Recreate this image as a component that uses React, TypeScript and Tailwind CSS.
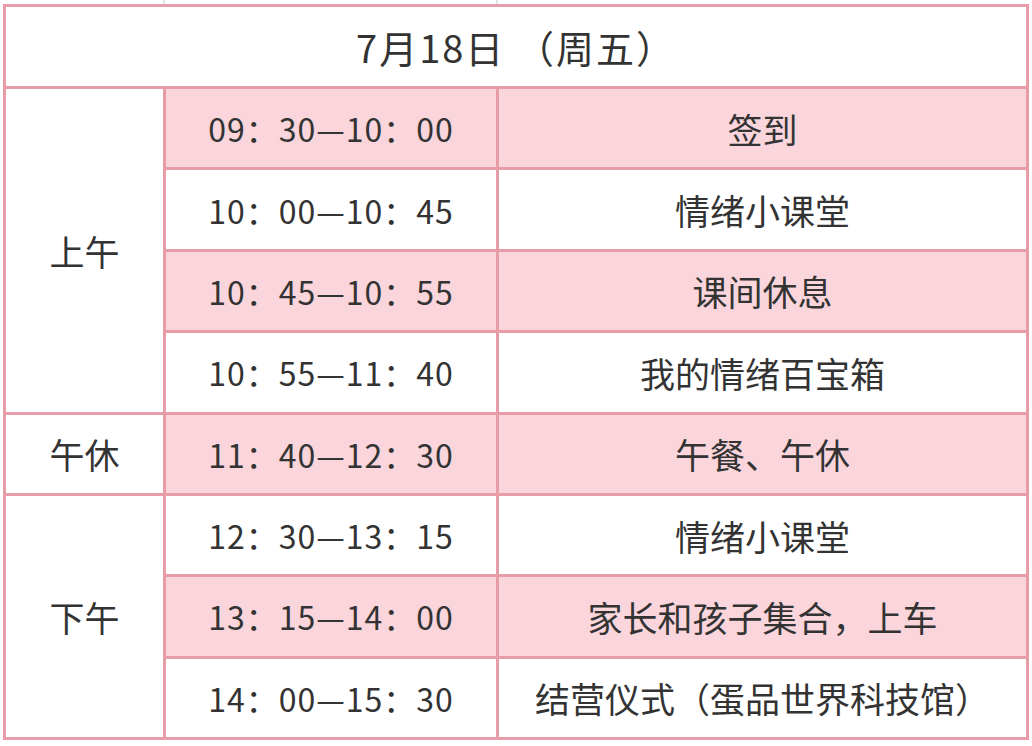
const rows = [
  { time: "09：30—10：00", text: "签到", pink: true },
  { time: "10：00—10：45", text: "情绪小课堂", pink: false },
  { time: "10：45—10：55", text: "课间休息", pink: true },
  { time: "10：55—11：40", text: "我的情绪百宝箱", pink: false },
  { time: "11：40—12：30", text: "午餐、午休", pink: true },
  { time: "12：30—13：15", text: "情绪小课堂", pink: false },
  { time: "13：15—14：00", text: "家长和孩子集合，上车", pink: true },
  { time: "14：00—15：30", text: "结营仪式（蛋品世界科技馆）", pink: false },
];

const periods = [
  { label: "上午", cls: "row-start-2 row-span-4" },
  { label: "午休", cls: "row-start-6 row-span-1" },
  { label: "下午", cls: "row-start-7 row-span-3" },
];

const rowStart = ["row-start-2", "row-start-3", "row-start-4", "row-start-5", "row-start-6", "row-start-7", "row-start-8", "row-start-9"];

export default function App() {
  return (
    <div
      className="w-[1032px] h-[746px] bg-white text-[#333333] overflow-hidden"
      style={{ fontFamily: '"Noto Sans CJK SC", "Noto Sans", sans-serif' }}
    >
      {/* faint lines above the table */}
      <div className="flex h-[4px]">
        <div className="w-[165px] border-r-2 border-[#e4e4e4]" />
        <div className="w-[333px] border-r-2 border-[#e4e4e4]" />
      </div>
      <div className="ml-[3px] w-[1026px] h-[736px] bg-[#e89ca7] p-[3px] grid grid-cols-[157px_330px_527px] grid-rows-[79px_repeat(8,1fr)] gap-[3px]">
        <div className="col-span-3 bg-white flex items-center justify-center text-[38px] tracking-[2px] leading-none">
          7月18日 （周五）
        </div>
        {periods.map((p) => (
          <div
            key={p.label}
            className={`${p.cls} col-start-1 bg-white flex items-center justify-center text-[35px] leading-none`}
          >
            {p.label}
          </div>
        ))}
        {rows.map((r, i) => (
          <div key={i} className="contents">
            <div
              className={`${rowStart[i]} col-start-2 flex items-center justify-center text-[32px] tracking-[1px] leading-none ${r.pink ? "bg-[#fad6dc]" : "bg-white"}`}
            >
              {r.time}
            </div>
            <div
              className={`${rowStart[i]} col-start-3 flex items-center justify-center text-[35px] leading-none ${r.pink ? "bg-[#fad6dc]" : "bg-white"}`}
            >
              {r.text}
            </div>
          </div>
        ))}
      </div>
    </div>
  );
}
